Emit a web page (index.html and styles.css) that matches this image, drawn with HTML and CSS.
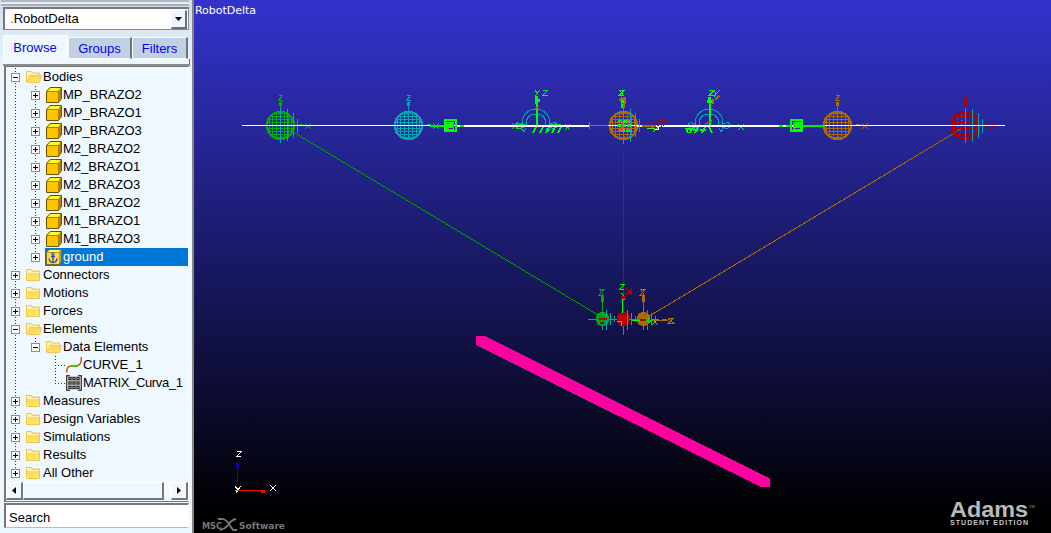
FILE: index.html
```html
<!DOCTYPE html>
<html lang="en">
<head>
<meta charset="utf-8">
<title>RobotDelta</title>
<link rel="stylesheet" href="styles.css">
</head>
<body>
<svg class="defs" aria-hidden="true">
  <defs>
    <linearGradient id="gold" x1="0" y1="0" x2="0" y2="1"><stop offset="0" stop-color="#ffcf68"/><stop offset="1" stop-color="#ffe95c"/></linearGradient>
    <symbol id="folder" viewBox="0 0 16 16"><path d="M.5 13.5v-11h5l1 1.500h7v9.500z" fill="url(#gold)" stroke="#f0c552"/><path d="M1 3h4l1 2h7v1H1z" fill="#fff5b0"/></symbol>
    <symbol id="open" viewBox="0 0 16 16"><path d="M.5 13V2.500h5l1 1.500h7V13z" fill="#fff0a0" stroke="#f0c552"/><path d="M1 13.500 4 6.500h11.500l-2 7z" fill="url(#gold)" stroke="#f5c75c"/></symbol>
    <symbol id="cube" viewBox="0 0 16 16"><path d="M.5 4.500 4 .5h11.500v11l-3 4H.5z" fill="#b17b00" stroke="#705000"/><path d="m1.500 4 3-3h10l-2 3z" fill="#ffff28"/><path d="M1 5h11v10H1z" fill="#fbc500"/><path d="m13 4 2-2.500v10L13 14z" fill="#b58200"/></symbol>
    <symbol id="anchor" viewBox="0 0 16 16"><path d="M.5 3.500 3 .5h12.500v12l-2.500 3H.5z" fill="#c99a20" stroke="#8a6a10"/><path d="m1.500 3 2-2h11l-2 2z" fill="#ffff60"/><path d="M1 4h12v11H1z" fill="#ffd75a"/><path d="M7 6v7.500M5 7.500h4M3 9.500q.5 4 4 4t4-4" fill="none" stroke="#244b9c" stroke-width="1.300"/><circle cx="7" cy="4.800" r="1.200" fill="none" stroke="#244b9c"/></symbol>
    <symbol id="curve" viewBox="0 0 16 16"><path d="M.8 15.500V14q0-4.500 4.500-5h4q6 0 6-7V0" fill="none" stroke="#c46a00" stroke-width="1.600"/><path d="M5 9h5.500" stroke="#12d90b" stroke-width="1.800"/></symbol>
    <symbol id="matrix" viewBox="0 0 16 16"><path d="M4 .7H.7v14.600H4M12 .7h3.300v14.600H12" fill="none" stroke="#444" stroke-width="1.400"/><path d="M2 1.500h12v13H2z" fill="#a5a5a5"/><path d="M2.500 3.500h11M2.500 8h11M2.500 12.500h11" stroke="#222" stroke-width="3" stroke-dasharray="3 1"/><path d="M3.500 3.500h9M3.500 8h9M3.500 12.500h9" stroke="#fff" stroke-width="1.200" stroke-dasharray="1 3"/></symbol>
  </defs>
</svg>
<div class="app">
  <aside class="sidebar">
    <div class="grip"></div>
    <div class="combo"><span><i>.</i>RobotDelta</span><button class="drop" aria-label="Open"><svg viewBox="0 0 7 4"><path d="M0 0h7L3.500 4z"/></svg></button></div>
    <nav class="tabs"><a class="tab active">Browse</a><a class="tab">Groups</a><a class="tab">Filters</a></nav>
    <div class="band"></div>
    <div class="panel">
      <ul class="tree">
        <li class="row"><b class="box"></b><svg class="icon"><use href="#open"/></svg>Bodies</li>
        <li><ul class="branch long">
          <li class="row"><b class="box plus"></b><svg class="icon"><use href="#cube"/></svg>MP_BRAZO2</li>
          <li class="row"><b class="box plus"></b><svg class="icon"><use href="#cube"/></svg>MP_BRAZO1</li>
          <li class="row"><b class="box plus"></b><svg class="icon"><use href="#cube"/></svg>MP_BRAZO3</li>
          <li class="row"><b class="box plus"></b><svg class="icon"><use href="#cube"/></svg>M2_BRAZO2</li>
          <li class="row"><b class="box plus"></b><svg class="icon"><use href="#cube"/></svg>M2_BRAZO1</li>
          <li class="row"><b class="box plus"></b><svg class="icon"><use href="#cube"/></svg>M2_BRAZO3</li>
          <li class="row"><b class="box plus"></b><svg class="icon"><use href="#cube"/></svg>M1_BRAZO2</li>
          <li class="row"><b class="box plus"></b><svg class="icon"><use href="#cube"/></svg>M1_BRAZO1</li>
          <li class="row"><b class="box plus"></b><svg class="icon"><use href="#cube"/></svg>M1_BRAZO3</li>
          <li class="row selected"><b class="box plus"></b><svg class="icon"><use href="#anchor"/></svg>ground</li>
        </ul></li>
        <li class="row"><b class="box plus"></b><svg class="icon"><use href="#folder"/></svg>Connectors</li>
        <li class="row"><b class="box plus"></b><svg class="icon"><use href="#folder"/></svg>Motions</li>
        <li class="row"><b class="box plus"></b><svg class="icon"><use href="#folder"/></svg>Forces</li>
        <li class="row"><b class="box"></b><svg class="icon"><use href="#open"/></svg>Elements</li>
        <li><ul class="branch">
          <li class="row"><b class="box"></b><svg class="icon"><use href="#open"/></svg>Data Elements</li>
          <li><ul class="branch leaves">
            <li class="row"><b class="leaf"></b><svg class="icon"><use href="#curve"/></svg>CURVE_1</li>
            <li class="row tight"><b class="leaf"></b><svg class="icon"><use href="#matrix"/></svg>MATRIX_Curva_1</li>
          </ul></li>
        </ul></li>
        <li class="row"><b class="box plus"></b><svg class="icon"><use href="#folder"/></svg>Measures</li>
        <li class="row"><b class="box plus"></b><svg class="icon"><use href="#folder"/></svg>Design Variables</li>
        <li class="row"><b class="box plus"></b><svg class="icon"><use href="#folder"/></svg>Simulations</li>
        <li class="row"><b class="box plus"></b><svg class="icon"><use href="#folder"/></svg>Results</li>
        <li class="row"><b class="box plus"></b><svg class="icon"><use href="#folder"/></svg>All Other</li>
      </ul>
      <div class="scroll"><span class="arrow"><svg viewBox="0 0 4 7"><path d="M4 0v7L0 3.500z"/></svg></span><span class="thumb"></span><span class="track"></span><span class="arrow"><svg viewBox="0 0 4 7"><path d="M0 0v7l4-3.500z"/></svg></span></div>
    </div>
    <div class="search">Search</div>
  </aside>
  <main class="stage">
    <svg class="scene" viewBox="194 0 857 533">
      <defs>
        <g id="sphere" fill="none" stroke="currentColor">
          <circle cx=".5" cy=".5" r="13.500" stroke-width="2.500"/><path d="M-8-11.500H8M-11-8.500h23M-13-5.500h27M-14-2.500h29M-14 3.500h29M-13 6.500h27M-10 9.500h21M-7 12.500H8M.5-14v29M-3.500-14v28M4.500-14v28M-7.500-12v25M8.500-12v25M-10.500-9V10M11.500-9V10M-12.500-7V8M13-6V7"/><path d="M-.5-14v4M1.500 11v4"/>
        </g>
        <g id="zaxis" fill="none" stroke="currentColor"><path d="M.5-14v-9M-1.500-29.500h4L-1.500-24.500h4"/><path d="M.5-23v4" stroke-width="3"/></g>
        <g id="xaxis" fill="none" stroke="currentColor"><path d="M14 .5h9M25-2l6 6M31-2l-6 6"/><path d="M19 0h4" stroke-width="2"/></g>
        <g id="rays" stroke="#00a6b0"><path d="M.5-17v35M7.500-16v32M13.500-12v25M17.500-6V8"/></g>
        <g id="motor" fill="none" stroke="#00ff00" stroke-width="2"><rect x="-5" y="-5" width="11" height="11"/><path d="M-3-3h7v7h-7z" stroke-width="1"/><path d="M-1-2h3v4h-4V0h5"/><path d="M3.500-2v5M-3 3.500h2" stroke="#d2556f" stroke-width="1"/></g>
        <g id="arc" fill="none" stroke="#00a6b0"><path d="M-14 0C-14-10-8-16 0-16S14-10 14 0M-10 0C-10-8-6-11 0-11S10-8 10 0M-14-1q-7-3-7 2 3 4 9 1M14-1q7-3 8 2-3 4-9 1M-10 3l-2 4-3-4M10 3l2 4 3-4"/></g>
        <g id="mini" fill="none"><circle r="7" cx=".5" fill="currentColor"/><path d="M-14 .5h8M8 .5h8M.5-9v4M.5 7v4M4.500-9v20M8.500-6v12M12.500-3v6" stroke="#00a6b0"/></g>
      </defs>
      <g shape-rendering="crispEdges">
        <path d="M623.500 110v185" stroke="#352a91"/>
        <path d="M293 132 603 318" stroke="#00a000"/>
        <path d="M961 129 643 320" stroke="#a66b05"/>
        <use href="#sphere" x="280" y="125" color="#00aa09"/><use href="#zaxis" x="280" y="125" color="#00aa09"/><use href="#xaxis" x="280" y="125" color="#00aa09"/><use href="#rays" x="280" y="125"/>
        <use href="#sphere" x="408" y="125" color="#00a6b0"/><use href="#zaxis" x="408" y="125" color="#00a6b0"/><use href="#xaxis" x="408" y="125" color="#00a6b0"/>
        <use href="#sphere" x="623" y="125" color="#a86c00"/>
        <use href="#sphere" x="837" y="125" color="#a86c00"/><use href="#zaxis" x="837" y="125" color="#a86c00"/><use href="#xaxis" x="837" y="125" color="#a86c00"/>
        <use href="#sphere" x="965" y="125" color="#b00000"/><use href="#zaxis" x="965" y="125" color="#b00000"/><use href="#xaxis" x="965" y="125" color="#b00000"/><use href="#rays" x="965" y="125"/>
        <path d="M957.500 118v13M961.500 116v12" stroke="#00a6b0" stroke-dasharray="1 3"/>
        <use href="#arc" x="536" y="125"/><use href="#arc" x="709" y="125"/>
        <g fill="none" stroke="#00ff00">
          <path d="M512 123l6 6M518 123l-6 6M516 124h9l-4 4h-5M550 124h11M565 124l5 6M570 124l-5 6" stroke="#00df1d"/>
          <path d="M537 99v26M710 101v24" stroke-width="2"/><path d="M534.500 100.500h5M536.500 96v8M707 101h6M709.500 97v6" stroke-width="3"/>
          <path d="M536 127l-3 6M543 127l-3 6M549 127l-3 6M555 127l-3 6M561 127l-3 6" stroke-width="2"/>
          <path d="M686 128l2 5M693 127l-3 6M698 127l-3 6M705 127l-3 6M709 127l3 6M686 129h6M693 130h5M700 130h6" stroke-width="2"/>
          <path d="M688 126h18M535 90l2 3 3-3M537.500 93l-2 3M543 90.500h4l-4 5h5M709 90.500h5l-5 5h5M714 90l2 4 4-4M716 94l-2 3M729 125h5M738 124l6 6M744 124l-6 6"/>
        </g>
        <path d="M715 100l4-4M713 99v5M538 106l-2 3M705 124l7-3" stroke="#a86c00" stroke-width="1.500" fill="none"/>
        <path d="M242 125.500h763" stroke="#fff"/><path d="M456 126h133M637 126h165" stroke="#fff" stroke-width="2"/>
        <path d="M430 126h15M460 126h4M803 126h22" stroke="#00ee00" stroke-width="2"/><path d="M779 126h4M786 126h4" stroke="#00ff00" stroke-width="2"/>
        <use href="#motor" x="449.500" y="125"/><use href="#motor" x="796" y="125"/>
        <path d="M589.500 122v7M590 125.500h18" stroke="#00a6b0"/><path d="M623.500 108v36M630.500 109v33M635.500 113v24M639.500 119v13" stroke="#00a6b0"/><path d="M623.500 144v7" stroke="#aa0000"/>
        <path d="M618 121h12M617 125h15M621 130h11M622 99v9" stroke="#00ff00" stroke-width="3" stroke-dasharray="4 1"/>
        <path d="M617 122h5v8h-4M628 120v5M626 129h5" fill="none" stroke="#d34b70" stroke-width="2"/>
        <path d="M619 90.500h5l-5 5h5M620 90l3 5M621 97v8" fill="none" stroke="#00ff00"/><path d="M619 100l6-2v6M624 103v5" fill="none" stroke="#a86c00" stroke-width="2"/>
        <path d="M643 123h10M645 121l-2 4M649 126l3-5 2 5M655 120l3 6 3-6M661 121v6M662 120h4l-3 6" fill="none" stroke="#b00000"/>
        <path d="M642 125.500h14" stroke="#a86c00" stroke-width="2"/><path d="M647 128h8M652 127l3 3 3-3M656 129l-3 3" fill="none" stroke="#4bea20"/><path d="M655 129.500h3.500v-3" stroke="#fff" fill="none"/>

        <use href="#mini" x="602" y="319" color="#00a510"/><use href="#mini" x="623" y="319" color="#b00000"/><use href="#mini" x="643" y="319" color="#a86c00"/>
        <path d="M602.500 301v11" stroke="#00aa00"/><path d="M602 296v6" stroke="#00aa00" stroke-width="3"/><path d="M599 289.500h5l-5 6h5M600 290l3 5" fill="none" stroke="#00aa00"/>
        <path d="M643.500 301v11" stroke="#a86c00"/><path d="M643.500 296v6" stroke="#a86c00" stroke-width="3"/><path d="M640 289.500h5l-5 6h5M641 290l3 5" fill="none" stroke="#a86c00"/>
        <path d="M623.500 270v44" stroke="#b00000"/><path d="M622.500 300v13" stroke="#00ff00" stroke-width="1"/><path d="M620 284.500h4l-4 5h4M621 293l3 3-2 3 3 1M632 320.500h16M652 319l6 6M658 319l-6 6M617 321h4v5" fill="none" stroke="#00ff00"/><path d="M646 320.500h6M648.500 317v6" stroke="#00e000" stroke-width="2"/>
        <path d="M621 297h5" stroke="#b00000" stroke-width="3"/>
        <path d="M626 289l6 5M632 289l-6 5M599 319h8M600 323h4M640 320h6" stroke="#b00000" stroke-width="1.500"/>
        <path d="M651 320.500h17M668 318.500h5l-5 5h6l-6-5M623.500 327v8" fill="none" stroke="#a86c00"/><path d="M662 320h5" stroke="#a86c00" stroke-width="2"/>
        <path d="M476 336h9L770 478.500V487h-9L476 345z" fill="#ff00a0"/>
        <path d="M237.500 490v-24" stroke="#0000ff"/><path d="M237 463v3M236 466h3" stroke="#0000ff" stroke-width="2"/><path d="M238 490.500h26" stroke="#f00"/><path d="M261 491h4" stroke="#f00" stroke-width="3"/>
        <path d="M237 451.500h4l-4 5h4M235 486l3 4 3-4M238 490l-2 3M270 485l6 6M276 485l-6 6" fill="none" stroke="#fff"/><path d="M235 490.500h3" stroke="#00ff00"/>
      </g>
      <path d="M218 519h5q4 1 6 5l4 6h4M236 519q-5 1-8 6-3 4-8 5" fill="none" stroke="#777" stroke-width="1.800"/>
      <text class="label" x="195" y="14" textLength="61">RobotDelta</text>
      <text class="vendor" x="202" y="528.500" textLength="20" lengthAdjust="spacingAndGlyphs">MSC</text><text class="vendor" x="239" y="528.500" textLength="46" lengthAdjust="spacingAndGlyphs">Software</text>
      <text class="brand" x="950" y="517" textLength="78" lengthAdjust="spacingAndGlyphs">Adams</text><text class="tm" x="1029" y="508">TM</text>
      <text class="edition" x="950" y="525" textLength="78">STUDENT EDITION</text>
    </svg>
  </main>
</div>
</body>
</html>
```
FILE: styles.css
```css
* { box-sizing: border-box; }
body { margin: 0; overflow: hidden; font: 13px/18px "Liberation Sans", Arial, sans-serif; color: #000; }
.defs { display: block; width: 0; height: 0; }
.app { display: flex; width: 1051px; height: 533px; background: #000; }
.sidebar { display: flex; flex-direction: column; width: 194px; height: 533px; padding: 0 3px 0 3px; background: linear-gradient(#d2deec, #edf7ff 80px); border-right: 2px solid #858585; }
.grip { height: 6px; margin: 0 0 1px -2px; border-top: 2px solid #b2b8c0; border-bottom: 2px solid #aab1bb; background: #e7eef7; }
.combo { display: flex; height: 23px; padding: 1px; border: 1px solid #888; border-top: 2px solid #777; border-left: 2px solid #777; background: #fff; align-items: center; }
.combo span { flex: 1; padding-left: 4px; }
.combo i { color: #a56800; font-style: normal; }
.drop { display: flex; width: 16px; height: 19px; padding: 0; align-items: center; justify-content: center; background: #edf5ff; border: 1px solid #fff; border-right: 2px solid #707070; border-bottom: 2px solid #707070; }
.drop svg { width: 7px; height: 4px; }
.tabs { display: flex; height: 24px; margin-top: 5px; align-items: flex-end; color: #0b00f5; }
.tab { display: flex; height: 22px; width: 64px; padding-top: 2px; align-items: center; justify-content: center; background: #c1d1e2; border: 1px solid #f5faff; border-right: 2px solid #687584; }
.tab:last-child { width: 56px; }
.tab.active { width: 65px; height: 24px; background: #f0f8ff; border-color: #f8fcff; }
.band { height: 7px; background: #f0f8ff; border-bottom: 2px solid #8b8b8b; border-right: 1px solid #777; width: 187px; }
.panel { height: 436px; margin: 0 0 1px 1px; border: 1px solid #777; border-left-width: 2px; border-right: 1px solid #fff; background: #eff8ff; }
.tree, .tree ul { list-style: none; margin: 0; padding: 0; }
.tree { height: 414px; padding-left: 5px; position: relative; top: 1px; background: repeating-linear-gradient(#333 0 1px, transparent 1px 3px) 9px 0 / 1px 406px no-repeat; }
.row { display: flex; height: 18px; align-items: center; white-space: nowrap; }
.box { display: grid; flex: none; place-items: center; width: 9px; height: 9px; margin-right: 6px; background: #fff; border: 1px solid #8c8c8c; }
.box::before { content: ""; width: 5px; height: 1px; background: #000; grid-area: 1 / 1; }
.box.plus::after { content: ""; width: 1px; height: 5px; background: #000; grid-area: 1 / 1; }
.icon { width: 16px; height: 16px; margin-right: 1px; flex: none; }
.branch { background: repeating-linear-gradient(#333 0 1px, transparent 1px 3px) 24px 0 / 1px 9px no-repeat; }
.branch.long { background-size: 1px 174px; }
.branch .row { padding-left: 20px; }
.branch.leaves { background-position: 44px 0; background-size: 1px 29px; }
.branch.leaves .row { padding-left: 44px; }
.tight { letter-spacing: -.35px; }
.leaf { width: 11px; height: 1px; flex: none; background: repeating-linear-gradient(90deg, #333 0 1px, transparent 1px 3px); }
.selected { color: #fff; background: linear-gradient(#0078d7, #0078d7) 34px 0 / 149px 18px no-repeat; }
.scroll { display: flex; height: 18px; margin-top: 1px; }
.arrow, .thumb { display: flex; align-items: center; justify-content: center; background: #eff8ff; border: 1px solid #fff; border-right: 2px solid #777; border-bottom: 2px solid #777; }
.arrow { width: 17px; }
.arrow svg { width: 4px; height: 7px; }
.thumb { width: 142px; }
.track { width: 7px; background: #f7fbff; }
.search { height: 25px; margin-left: 1px; padding: 4px 4px 0 3px; line-height: 18px; border: 2px solid #777; border-right: 1px solid #fff; border-bottom: 1px solid #bbb; background: #fff; }
.stage { width: 857px; height: 533px; background: linear-gradient(#3333cc, #000 515px); }
.scene { display: block; width: 857px; height: 533px; }
.label { font: 11px "DejaVu Sans", sans-serif; fill: #fff; }
.vendor { font: bold 9px "DejaVu Sans", sans-serif; fill: #777; }
.brand { font: bold 22px "Liberation Sans", sans-serif; fill: #b9b9b9; }
.tm { font: 4px "Liberation Sans", sans-serif; fill: #999; }
.edition { font: bold 7px "Liberation Sans", sans-serif; fill: #c8c8c8; }
```
